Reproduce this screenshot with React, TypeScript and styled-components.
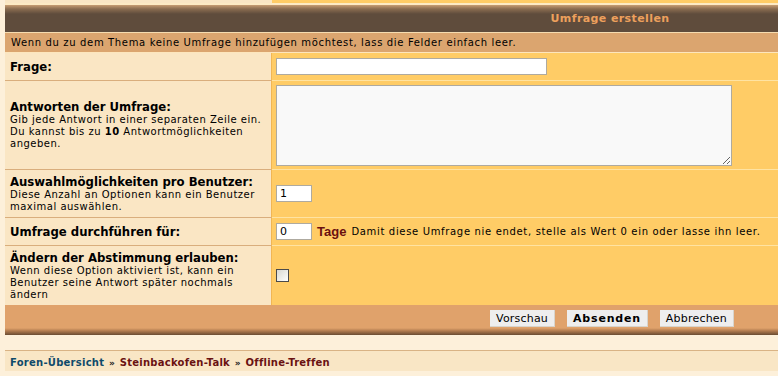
import React from 'react';
import styled, { createGlobalStyle } from 'styled-components';

const GlobalStyle = createGlobalStyle`
  html, body {
    margin: 0;
    padding: 0;
    background: #fdf0da;
    overflow: hidden;
  }
  body {
    font-family: "DejaVu Sans", Verdana, sans-serif;
    color: #000;
  }
`;

interface Field {
  label: string;
  hint?: React.ReactNode;
  height: number;
  control: React.ReactNode;
}

const App: React.FC = () => {
  const fields: Field[] = [
    {
      label: 'Frage:',
      height: 28,
      control: <TextInput type="text" $width={271} />,
    },
    {
      label: 'Antworten der Umfrage:',
      hint: (
        <>
          Gib jede Antwort in einer separaten Zeile ein. Du kannst bis zu <b>10</b>{' '}
          Antwortmöglichkeiten angeben.
        </>
      ),
      height: 89,
      control: <TextArea />,
    },
    {
      label: 'Auswahlmöglichkeiten pro Benutzer:',
      hint: 'Diese Anzahl an Optionen kann ein Benutzer maximal auswählen.',
      height: 48,
      control: <TextInput type="text" $width={36} defaultValue="1" />,
    },
    {
      label: 'Umfrage durchführen für:',
      height: 28,
      control: (
        <>
          <TextInput type="text" $width={36} defaultValue="0" />
          <Unit>Tage</Unit>
          <Explain>Damit diese Umfrage nie endet, stelle als Wert 0 ein oder lasse ihn leer.</Explain>
        </>
      ),
    },
    {
      label: 'Ändern der Abstimmung erlauben:',
      hint: 'Wenn diese Option aktiviert ist, kann ein Benutzer seine Antwort später nochmals ändern',
      height: 59,
      control: <CheckBox type="checkbox" />,
    },
  ];

  return (
    <>
      <GlobalStyle />
      <Table>
        <StubRow>
          <StubLeft />
          <StubRight />
        </StubRow>
        <Header>Umfrage erstellen</Header>
        <Notice>Wenn du zu dem Thema keine Umfrage hinzufügen möchtest, lass die Felder einfach leer.</Notice>
        {fields.map((f, i) => (
          <Row key={f.label} $height={f.height}>
            <LabelCell $last={i === fields.length - 1}>
              <Label>{f.label}</Label>
              {f.hint && <Hint>{f.hint}</Hint>}
            </LabelCell>
            <FieldCell $last={i === fields.length - 1}>{f.control}</FieldCell>
          </Row>
        ))}
        <ButtonBar>
          <Button type="button">Vorschau</Button>
          <Button type="button" $primary>Absenden</Button>
          <Button type="button">Abbrechen</Button>
        </ButtonBar>
      </Table>
      <Breadcrumb>
        <Crumb $color="#0f4a6a">Foren-Übersicht</Crumb> <Sep>»</Sep>{' '}
        <Crumb $color="#6a1212">Steinbackofen-Talk</Crumb> <Sep>»</Sep>{' '}
        <Crumb $color="#6a1212">Offline-Treffen</Crumb>
      </Breadcrumb>
    </>
  );
};

export default App;

const Table = styled.div`
  width: 1210px;
  margin-left: 5px;
`;

const StubRow = styled.div`
  display: grid;
  grid-template-columns: 267px 1fr;
  height: 3px;
  border-bottom: 2px solid #fdeac4;
`;

const StubLeft = styled.div`
  background: #fae6c4;
`;

const StubRight = styled.div`
  background: #ffcc66;
`;

const Header = styled.div`
  height: 27px;
  line-height: 28px;
  text-align: center;
  font-size: 11px;
  font-weight: bold;
  letter-spacing: 0.4px;
  color: #eda05c;
  background: linear-gradient(to bottom, #c89d72 0px, #8a6c50 4px, #5f4c3c 9px, #5f4c3c 100%);
  border-bottom: 1px solid #f6dcb0;
`;

const Notice = styled.div`
  height: 19px;
  line-height: 19px;
  padding-left: 6px;
  font-size: 10px;
  letter-spacing: 0.65px;
  background: #dba56f;
  border-bottom: 1px solid #fde6bd;
`;

const Row = styled.div<{ $height: number }>`
  display: grid;
  grid-template-columns: 267px 1fr;
  min-height: ${(p) => p.$height}px;
`;

const LabelCell = styled.div<{ $last?: boolean }>`
  display: flex;
  flex-direction: column;
  justify-content: center;
  padding: 0 2px 0 5px;
  background: #fae6c4;
  border-right: 1px solid #f2b653;
  border-bottom: ${(p) => (p.$last ? 'none' : '1px solid #d9ae7d')};
`;

const FieldCell = styled.div<{ $last?: boolean }>`
  display: flex;
  align-items: center;
  padding: 0 4px;
  background: #ffcc66;
  border-bottom: ${(p) => (p.$last ? 'none' : '1px solid #ffe3a2')};
`;

const Label = styled.div`
  font-size: 11.7px;
  font-weight: bold;
  line-height: 14px;
`;

const Hint = styled.div`
  font-size: 10px;
  line-height: 12px;
  letter-spacing: 0.5px;
`;

const TextInput = styled.input<{ $width: number }>`
  box-sizing: border-box;
  width: ${(p) => p.$width}px;
  height: 17px;
  padding: 0 3px;
  font-family: "DejaVu Sans", Verdana, sans-serif;
  font-size: 11px;
  background: #ffffff;
  border: 1px solid #aeaaa0;
  outline: none;
`;

const TextArea = styled.textarea`
  box-sizing: border-box;
  width: 456px;
  height: 81px;
  background: #f9f9f9;
  border: 1px solid #aeaaa0;
  font-family: "DejaVu Sans", Verdana, sans-serif;
  font-size: 11px;
  outline: none;
`;

const Unit = styled.span`
  margin-left: 5px;
  font-weight: bold;
  color: #6a1010;
  font-family: "Liberation Sans", Arial, sans-serif;
  font-size: 13px;
`;

const Explain = styled.span`
  margin-left: 5px;
  font-size: 10px;
  letter-spacing: 0.67px;
`;

const CheckBox = styled.input`
  appearance: none;
  box-sizing: border-box;
  width: 13px;
  height: 13px;
  margin: 0;
  border: 1px solid #4a4a4a;
  background: linear-gradient(135deg, #d8d8d2 0%, #f4f4f0 70%, #ffffff 100%);
`;

const ButtonBar = styled.div`
  display: flex;
  justify-content: center;
  gap: 12px;
  height: 30px;
  padding-top: 5px;
  padding-left: 4px;
  box-sizing: border-box;
  background: linear-gradient(to bottom, #e0a26b 0px, #e0a26b 23px, #b07a4e 26px, #6a4c32 30px);
`;

const Button = styled.button<{ $primary?: boolean }>`
  height: 17px;
  padding: 0 6px;
  border: none;
  border-right: 1px solid #d8d4cc;
  border-bottom: 1px solid #d8d4cc;
  background: #eeeeee;
  font-family: "DejaVu Sans", Verdana, sans-serif;
  font-size: 11px;
  letter-spacing: ${(p) => (p.$primary ? '0.8px' : '0.2px')};
  font-weight: ${(p) => (p.$primary ? 'bold' : 'normal')};
  color: #000;
`;

const Breadcrumb = styled.div`
  margin: 15px 0 0 5px;
  width: 1210px;
  height: 21px;
  line-height: 23px;
  padding-left: 5px;
  box-sizing: border-box;
  background: #f9e6c5;
  border-top: 1px solid #d9b385;
  font-size: 10px;
  font-weight: bold;
  letter-spacing: 0.25px;
`;

const Crumb = styled.span<{ $color: string }>`
  color: ${(p) => p.$color};
`;

const Sep = styled.span`
  margin: 0 1px;
  font-size: 9px;
  color: #222;
`;
